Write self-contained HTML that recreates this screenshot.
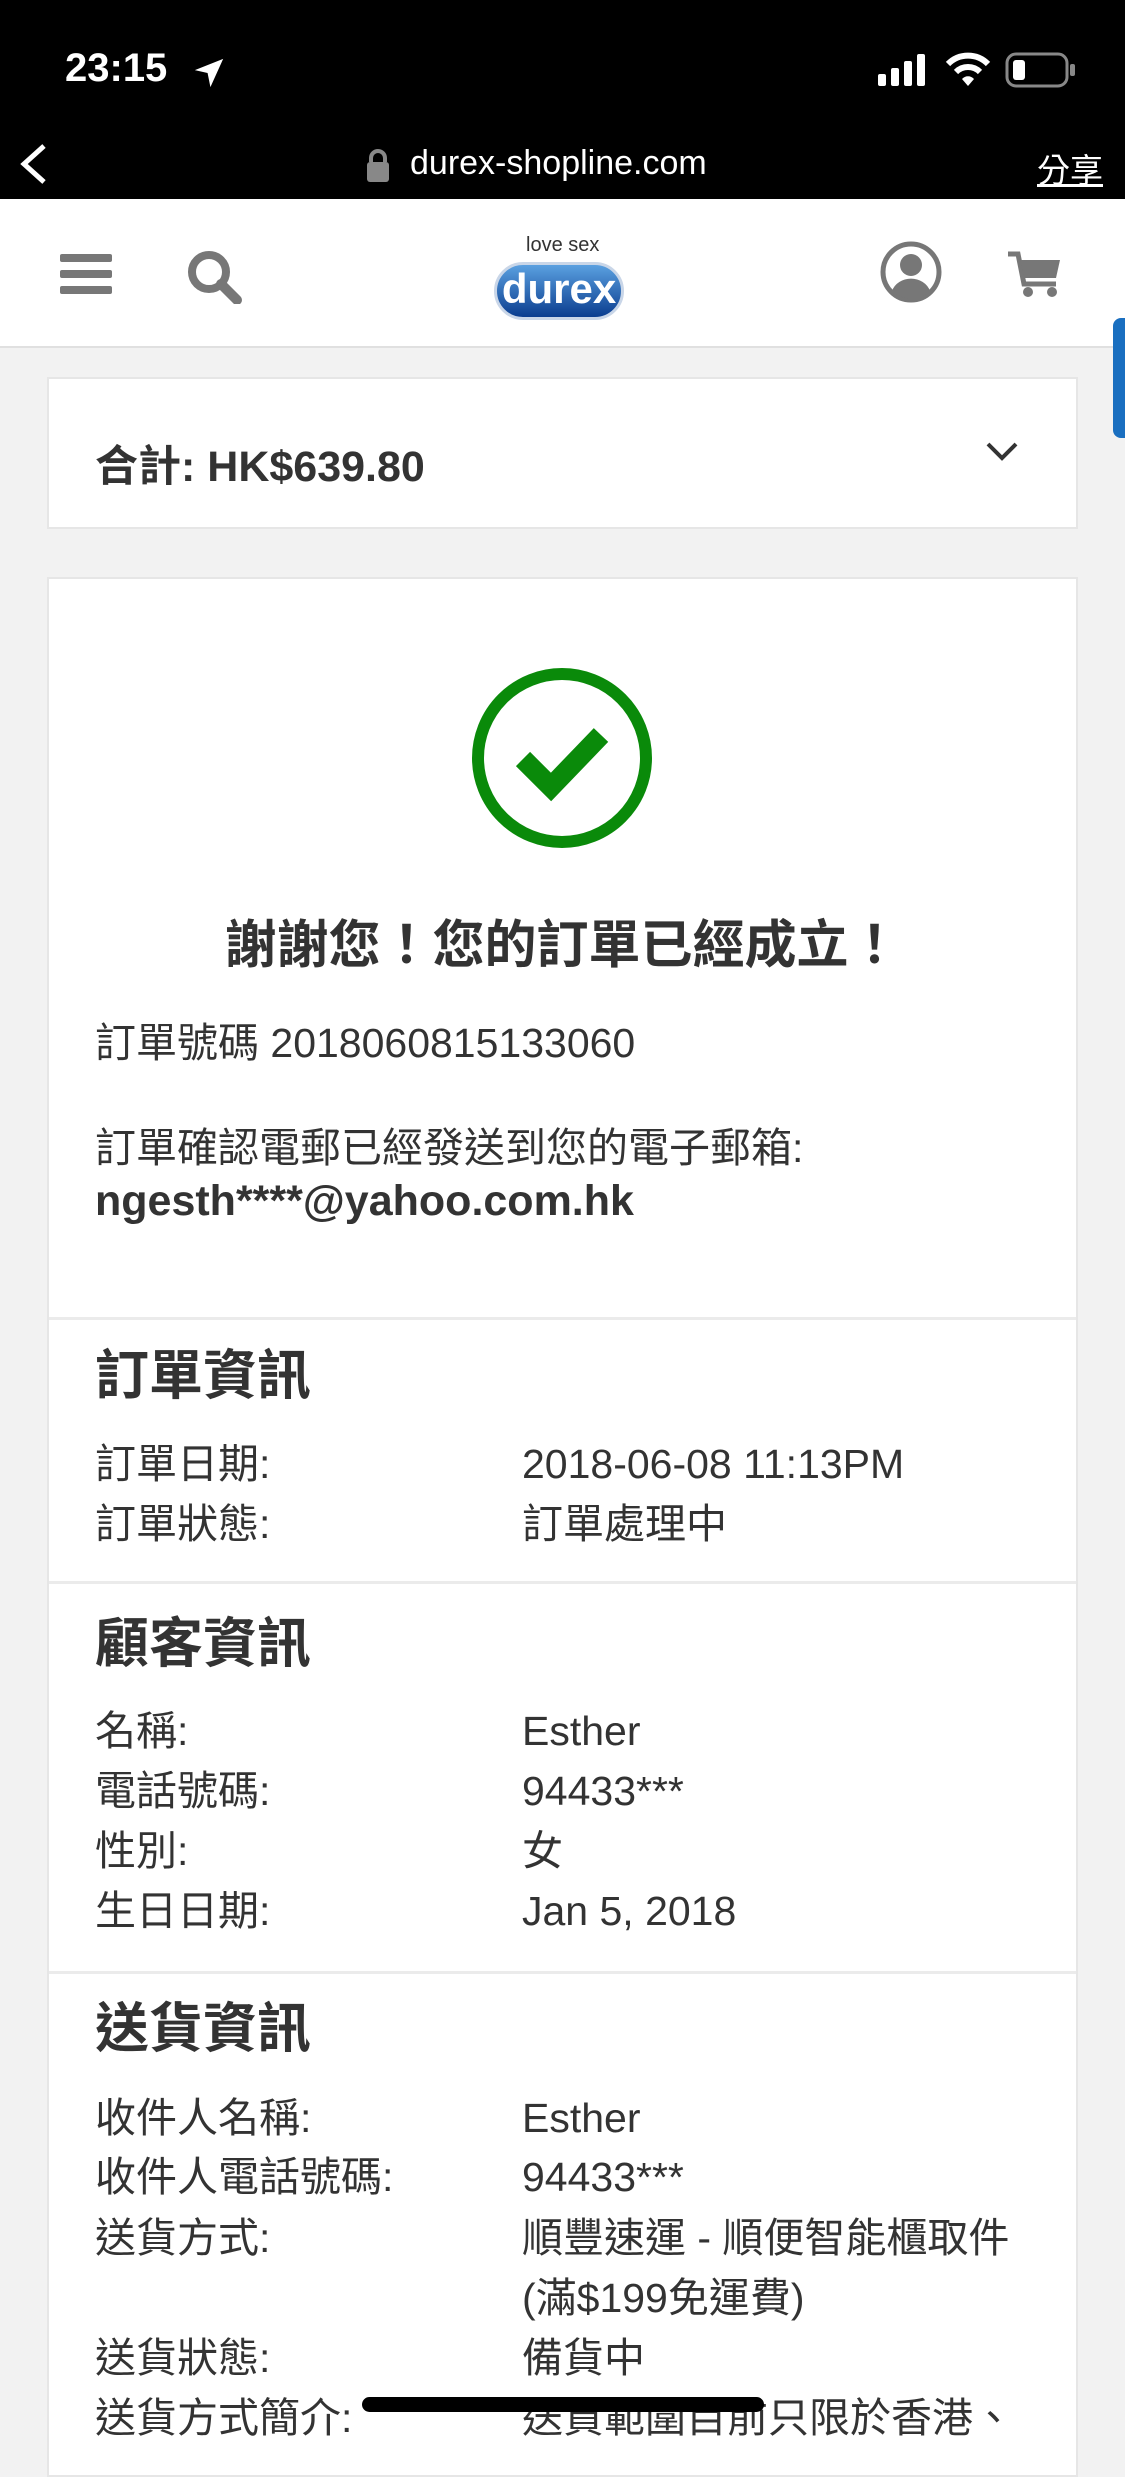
<!DOCTYPE html>
<html><head><meta charset="utf-8"><style>
*{margin:0;padding:0;box-sizing:border-box}
body{width:1125px;height:2436px;overflow:hidden;background:#f2f2f2;font-family:"Liberation Sans","Noto Sans CJK TC",sans-serif;color:#333;position:relative}
.a{position:absolute;white-space:nowrap}
.card{position:absolute;left:47px;width:1031px;background:#fff;border:2px solid #e6e6e6}
.h{font-size:54px;font-weight:bold;line-height:1}
.r{font-size:41px;line-height:1}
</style></head><body>
<div class="a" style="left:0;top:0;width:1125px;height:199px;background:#000"></div>
<div class="a" style="left:65px;top:46px;color:#fff;font-size:40px;font-weight:bold">23:15</div>
<svg class="a" style="left:192px;top:56px" width="34" height="34" viewBox="0 0 24 24"><path d="M22 2 L2 10 L11 12 L13 22 Z" fill="#fff"/></svg>
<svg class="a" style="left:878px;top:52px" width="52" height="34"><rect x="0" y="22" width="8" height="12" rx="2" fill="#fff"/><rect x="13" y="16" width="8" height="18" rx="2" fill="#fff"/><rect x="26" y="9" width="8" height="25" rx="2" fill="#fff"/><rect x="39" y="2" width="8" height="32" rx="2" fill="#fff"/></svg>
<svg class="a" style="left:945px;top:52px" width="46" height="36" viewBox="0 0 46 36"><path d="M3 12 A28 28 0 0 1 43 12" stroke="#fff" stroke-width="6" fill="none"/><path d="M11 20 A17 17 0 0 1 35 20" stroke="#fff" stroke-width="6" fill="none"/><path d="M17 27 L23 34 L29 27 A8 8 0 0 0 17 27Z" fill="#fff"/></svg>
<svg class="a" style="left:1005px;top:52px" width="72" height="36"><rect x="2" y="2" width="60" height="32" rx="9" stroke="#888" stroke-width="3" fill="none"/><rect x="8" y="8" width="12" height="20" rx="3" fill="#fff"/><rect x="65" y="12" width="5" height="12" rx="2" fill="#888"/></svg>
<svg class="a" style="left:14px;top:142px" width="36" height="44"><path d="M30 4 L10 22 L30 40" stroke="#fff" stroke-width="5" fill="none"/></svg>
<svg class="a" style="left:365px;top:148px" width="26" height="34"><path d="M6 14 V10 A7 7 0 0 1 20 10 V14" stroke="#888" stroke-width="4" fill="none"/><rect x="2" y="14" width="22" height="20" rx="3" fill="#888"/></svg>
<div class="a" style="left:410px;top:144px;color:#fff;font-size:34px">durex-shopline.com</div>
<div class="a" style="left:1037px;top:144px;color:#fff;font-size:33px;text-decoration:underline">分享</div>
<div class="a" style="left:0;top:199px;width:1125px;height:149px;background:#fff;border-bottom:2px solid #e0e0e0"></div>
<svg class="a" style="left:60px;top:254px" width="52" height="40"><rect y="0" width="52" height="8" rx="2" fill="#777"/><rect y="16" width="52" height="8" rx="2" fill="#777"/><rect y="32" width="52" height="8" rx="2" fill="#777"/></svg>
<svg class="a" style="left:185px;top:248px" width="60" height="56"><circle cx="24" cy="24" r="17" stroke="#777" stroke-width="8" fill="none"/><path d="M36 36 L52 52" stroke="#777" stroke-width="10" stroke-linecap="round"/></svg>
<div class="a" style="left:526px;top:234px;font-size:20px;color:#333">love sex</div>
<div class="a" style="left:494px;top:262px;width:130px;height:58px;border-radius:29px;background:linear-gradient(#5aa0e0,#0b3d8f);border:3px solid #c9d6e8;color:#fff;font-size:42px;text-align:center;line-height:48px;font-weight:bold">durex</div>
<svg class="a" style="left:880px;top:241px" width="62" height="62"><circle cx="31" cy="31" r="28" stroke="#777" stroke-width="5" fill="none"/><circle cx="31" cy="24" r="11" fill="#777"/><path d="M12 50 A20 18 0 0 1 50 50 A28 28 0 0 1 12 50Z" fill="#777"/></svg>
<svg class="a" style="left:1006px;top:250px" width="58" height="48"><path d="M2 4 H12 L18 34 H50" stroke="#777" stroke-width="5" fill="none"/><path d="M14 10 H54 L50 28 H18Z" fill="#777"/><circle cx="22" cy="42" r="5" fill="#777"/><circle cx="46" cy="42" r="5" fill="#777"/></svg>
<div class="a" style="left:1113px;top:318px;width:20px;height:120px;background:#1a6fc0;border-radius:8px"></div>

<div class="card" style="top:377px;height:152px"></div>
<div class="a" style="left:95px;top:432px;font-size:43px;font-weight:bold">合計: HK$639.80</div>
<svg class="a" style="left:985px;top:440px" width="34" height="24"><path d="M3 4 L17 18 L31 4" stroke="#333" stroke-width="4" fill="none"/></svg>

<div class="card" style="top:577px;height:1900px"></div>
<svg class="a" style="left:471px;top:667px" width="182" height="182"><circle cx="91" cy="91" r="84" stroke="#0a8a0a" stroke-width="12" fill="none"/><path d="M52 92 L80 120 L130 68" stroke="#0a8a0a" stroke-width="20" fill="none"/></svg>
<div class="a" style="left:0;width:1125px;text-align:center;top:903px;font-size:52px;font-weight:bold">謝謝您！您的訂單已經成立！</div>
<div class="a r" style="left:95px;top:1023px">訂單號碼 2018060815133060</div>
<div class="a r" style="left:95px;top:1128px">訂單確認電郵已經發送到您的電子郵箱:</div>
<div class="a" style="left:95px;top:1177px;font-size:43px;font-weight:bold">ngesth****@yahoo.com.hk</div>

<div class="a" style="left:49px;top:1317px;width:1027px;height:3px;background:#ebebeb"></div>
<div class="a h" style="left:95px;top:1349px">訂單資訊</div>
<div class="a r" style="left:95px;top:1444px">訂單日期:</div><div class="a r" style="left:522px;top:1444px">2018-06-08 11:13PM</div>
<div class="a r" style="left:95px;top:1504px">訂單狀態:</div><div class="a r" style="left:522px;top:1504px">訂單處理中</div>

<div class="a" style="left:49px;top:1581px;width:1027px;height:3px;background:#ebebeb"></div>
<div class="a h" style="left:95px;top:1617px">顧客資訊</div>
<div class="a r" style="left:95px;top:1711px">名稱:</div><div class="a r" style="left:522px;top:1711px">Esther</div>
<div class="a r" style="left:95px;top:1771px">電話號碼:</div><div class="a r" style="left:522px;top:1771px">94433***</div>
<div class="a r" style="left:95px;top:1831px">性別:</div><div class="a r" style="left:522px;top:1831px">女</div>
<div class="a r" style="left:95px;top:1891px">生日日期:</div><div class="a r" style="left:522px;top:1891px">Jan 5, 2018</div>

<div class="a" style="left:49px;top:1971px;width:1027px;height:3px;background:#ebebeb"></div>
<div class="a h" style="left:95px;top:2002px">送貨資訊</div>
<div class="a r" style="left:95px;top:2098px">收件人名稱:</div><div class="a r" style="left:522px;top:2098px">Esther</div>
<div class="a r" style="left:95px;top:2157px">收件人電話號碼:</div><div class="a r" style="left:522px;top:2157px">94433***</div>
<div class="a r" style="left:95px;top:2218px">送貨方式:</div><div class="a r" style="left:522px;top:2218px">順豐速運 - 順便智能櫃取件</div>
<div class="a r" style="left:522px;top:2278px">(滿$199免運費)</div>
<div class="a r" style="left:95px;top:2338px">送貨狀態:</div><div class="a r" style="left:522px;top:2338px">備貨中</div>
<div class="a r" style="left:95px;top:2398px">送貨方式簡介:</div><div class="a r" style="left:522px;top:2398px">送貨範圍目前只限於香港、</div>
<div class="a" style="left:362px;top:2397px;width:402px;height:15px;border-radius:8px;background:#000"></div>
</body></html>
